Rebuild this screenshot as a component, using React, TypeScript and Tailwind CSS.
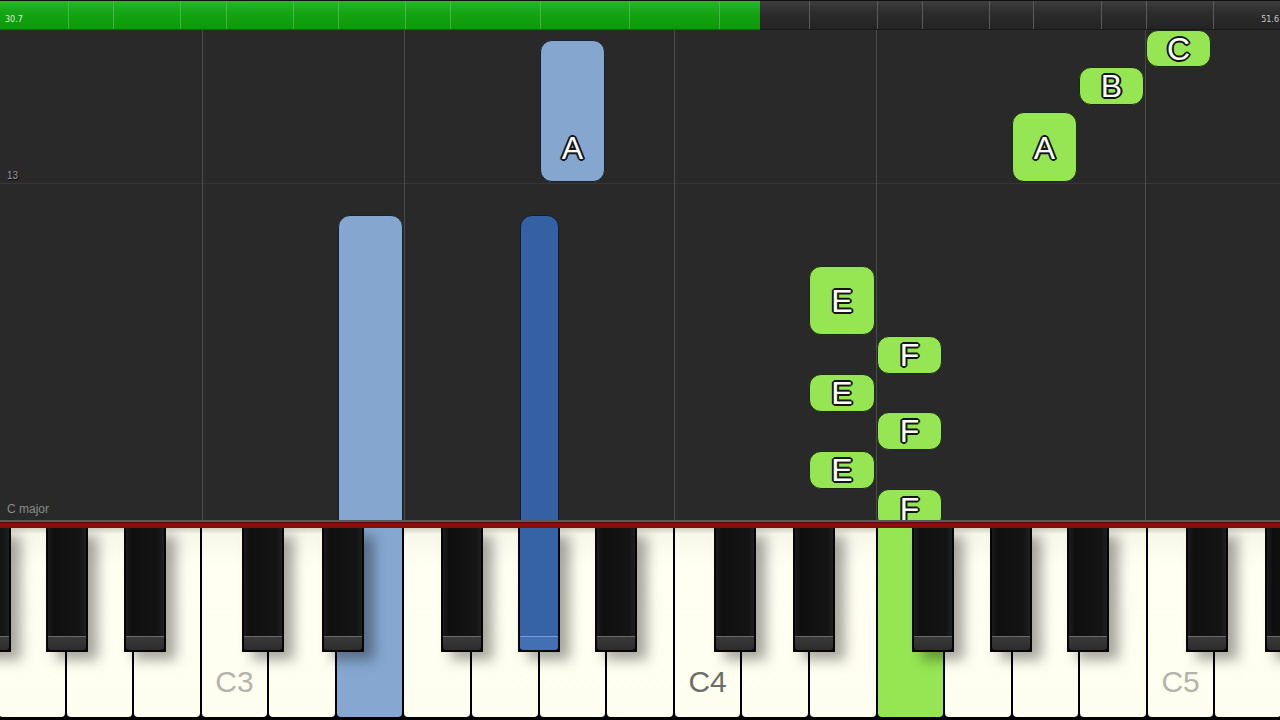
import { FC } from 'react';

const KEY_W = 1280 / 19;

// white keys from G2 to D5
const whiteKeys = ['G2', 'A2', 'B2', 'C3', 'D3', 'E3', 'F3', 'G3', 'A3', 'B3', 'C4', 'D4', 'E4', 'F4', 'G4', 'A4', 'B4', 'C5', 'D5'];

// black keys: boundary index + offset of the centre
const blackKeys = [
  { b: 0, off: -10 },
  { b: 1, off: 0 },
  { b: 2, off: 10 },
  { b: 4, off: -6 },
  { b: 5, off: 6 },
  { b: 7, off: -10 },
  { b: 8, off: 0, lit: true },
  { b: 9, off: 10 },
  { b: 11, off: -6 },
  { b: 12, off: 6 },
  { b: 14, off: -10 },
  { b: 15, off: 0 },
  { b: 16, off: 10 },
  { b: 18, off: -6 },
  { b: 19, off: 6 },
];

const barMarks = [68, 113, 180, 226, 293, 338, 405, 450, 540, 629, 719, 809, 877, 922, 989, 1033, 1101, 1146, 1213];
const gridLines = [202, 404, 674, 876, 1145];

type Note = { label?: string; left: number; width: number; top: number; height: number; color: 'green' | 'light' | 'dark' };

const notes: Note[] = [
  { label: 'A', left: 540, width: 65, top: 10, height: 142, color: 'light' },
  { left: 338, width: 65, top: 185, height: 330, color: 'light' },
  { left: 520, width: 39, top: 185, height: 330, color: 'dark' },
  { label: 'E', left: 809, width: 66, top: 236, height: 69, color: 'green' },
  { label: 'F', left: 877, width: 65, top: 306, height: 38, color: 'green' },
  { label: 'E', left: 809, width: 66, top: 344, height: 38, color: 'green' },
  { label: 'F', left: 877, width: 65, top: 382, height: 38, color: 'green' },
  { label: 'E', left: 809, width: 66, top: 421, height: 38, color: 'green' },
  { label: 'F', left: 877, width: 65, top: 459, height: 40, color: 'green' },
  { label: 'A', left: 1012, width: 65, top: 82, height: 70, color: 'green' },
  { label: 'B', left: 1079, width: 65, top: 37, height: 38, color: 'green' },
  { label: 'C', left: 1146, width: 65, top: 0, height: 37, color: 'green' },
];

const noteColors = {
  green: 'bg-[#95e652] border-[#1d2a12]',
  light: 'bg-[#84a6cf] border-[#18222f]',
  dark: 'bg-[#3561a4] border-[#131c2a]',
};

const outline =
  '[text-shadow:2px_0_0_#151515,-2px_0_0_#151515,0_2px_0_#151515,0_-2px_0_#151515,1.4px_1.4px_0_#151515,-1.4px_-1.4px_0_#151515,1.4px_-1.4px_0_#151515,-1.4px_1.4px_0_#151515]';

const TopBar: FC = () => (
  <div className="relative h-[30px] flex border-t border-[#111] font-['DejaVu_Sans',sans-serif] text-[8px] leading-none">
    <div className="w-[760px] flex items-end pl-[5px] pb-[5px] text-[#d8f0d8] bg-[linear-gradient(to_bottom,#2bb52b,#13a313_45%,#0a9a0a)] border-b border-[#0a6e0a]">
      30.7
    </div>
    <div className="flex-1 flex items-end justify-end pb-[5px] pr-[1px] text-[#c8c8c8] bg-[linear-gradient(to_bottom,#3e3e3e,#2c2c2c_45%,#232323)] border-b border-[#1a1a1a]">
      51.6
    </div>
    {barMarks.map((x) => (
      <div
        key={x}
        className={`absolute top-0 bottom-[1px] w-px ${x < 760 ? 'bg-[#5ec85e]/60' : 'bg-[#5a5a5a]'}`}
        style={{ left: x }}
      />
    ))}
  </div>
);

const Roll: FC = () => (
  <div className="relative h-[490px] overflow-hidden bg-[#292929]">
    <div className="absolute left-0 right-0 top-[153px] h-px bg-[#363636]" />
    {gridLines.map((x) => (
      <div key={x} className="absolute top-0 bottom-0 w-px bg-[#4b4b4b]" style={{ left: x }} />
    ))}
    <span className="absolute left-[7px] top-[138px] text-[10px] text-[#9a9a9a] [text-shadow:1px_1px_1px_#000]">13</span>
    <span className="absolute left-[7px] top-[470px] text-[12px] text-[#8c8c8c]">C major</span>
    {notes.map((n, i) => (
      <div
        key={i}
        className={`absolute flex flex-col justify-end rounded-[12px] border-[1.5px] ${noteColors[n.color]}`}
        style={{ left: n.left, top: n.top, width: n.width, height: n.height }}
      >
        {n.label && (
          <div className={`h-[66px] max-h-full flex items-center justify-center text-[32px] leading-none text-white ${outline}`}>
            {n.label}
          </div>
        )}
      </div>
    ))}
  </div>
);

const Keyboard: FC = () => (
  <div className="relative h-[192px] bg-black overflow-hidden">
    <div className="flex gap-[2px] h-[189px] -mx-px">
      {whiteKeys.map((k, i) => {
        const lit = i === 5 ? 'bg-[#85a7d0]' : i === 13 ? 'bg-[#95e652]' : 'bg-[linear-gradient(to_bottom,#cfcfc2,#f7f7ea_6px,#fffff2_40px,#fefef0)]';
        const labelColor = k === 'C4' ? 'text-[#6e6e68]' : 'text-[#b4b4aa]';
        return (
          <div key={k} className={`flex-1 rounded-b-[4px] flex flex-col justify-end items-center pb-[20px] ${lit}`}>
            {k.startsWith('C') && <span className={`text-[30px] leading-none ${labelColor}`}>{k}</span>}
          </div>
        );
      })}
    </div>
    {blackKeys.map((bk, i) => (
      <div
        key={i}
        className="absolute top-0 h-[124px] w-[42px] bg-[#050505] px-[2px] pb-[2px] flex flex-col shadow-[10px_8px_12px_rgba(0,0,0,0.35)]"
        style={{ left: bk.b * KEY_W + bk.off - 21 }}
      >
        <div className={`flex-1 rounded-b-[1px] ${bk.lit ? 'bg-[#3662a6]' : 'bg-[linear-gradient(to_right,#1c1c1c,#0f0f0f_15%,#141414_85%,#1f1f1f)]'}`} />
        <div className={`h-[14px] rounded-b-[3px] border-t ${bk.lit ? 'bg-[#4370b4] border-[#7c9ed0]' : 'bg-[linear-gradient(to_bottom,#3a3a3a,#2c2c2c)] border-[#6a6a6a]'}`} />
      </div>
    ))}
  </div>
);

export const App: FC = () => {
  return (
    <div className="w-[1280px] h-[720px] overflow-hidden bg-[#292929] font-['Liberation_Sans',Arial,sans-serif]">
      <TopBar />
      <Roll />
      <div className="h-[2px] bg-[#595959]" />
      <div className="h-[6px] bg-[linear-gradient(to_bottom,#5a0606,#950c0c_40%,#8a0a0a)]" />
      <Keyboard />
    </div>
  );
};

export default App;
